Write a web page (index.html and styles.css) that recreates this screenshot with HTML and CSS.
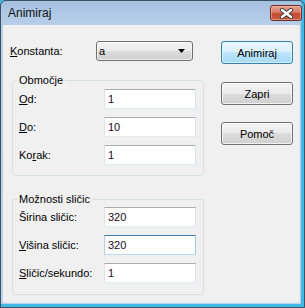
FILE: index.html
```html
<!DOCTYPE html>
<html>
<head>
<meta charset="utf-8">
<link rel="stylesheet" href="styles.css">
</head>
<body>
<div class="window">
  <div class="titlebar">
    <span class="title">Animiraj</span>
    <div class="close">
      <svg width="15" height="11" viewBox="0 0 15 11">
        <path d="M3 2 L12 9 M12 2 L3 9" stroke="#3b3b3b" stroke-width="4.2" stroke-linecap="round"/>
        <path d="M3 2 L12 9 M12 2 L3 9" stroke="#ffffff" stroke-width="2.4" stroke-linecap="round"/>
      </svg>
    </div>
  </div>
  <div class="client">
    <div class="left">
      <div class="top-row">
        <span class="lbl"><u>K</u>onstanta:</span>
        <div class="combo">
          <span>a</span>
          <svg width="7" height="4" viewBox="0 0 7 4"><path d="M0 0 H7 L3.5 4 Z" fill="#000"/></svg>
        </div>
      </div>
      <fieldset class="group g1">
        <legend>Območje</legend>
        <div class="field"><span class="flbl"><u>O</u>d:</span><div class="input">1</div></div>
        <div class="field"><span class="flbl"><u>D</u>o:</span><div class="input">10</div></div>
        <div class="field"><span class="flbl">Ko<u>r</u>ak:</span><div class="input">1</div></div>
      </fieldset>
      <fieldset class="group g2">
        <legend>Možnosti sličic</legend>
        <div class="field"><span class="flbl">Širina sličic:</span><div class="input">320</div></div>
        <div class="field"><span class="flbl"><u>V</u>išina sličic:</span><div class="input focus">320</div></div>
        <div class="field"><span class="flbl"><u>S</u>ličic/sekundo:</span><div class="input">1</div></div>
      </fieldset>
    </div>
    <div class="buttons">
      <div class="btn default">Animiraj</div>
      <div class="btn b2">Zapri</div>
      <div class="btn b3">Pomoč</div>
    </div>
  </div>
</div>
</body>
</html>
```
FILE: styles.css
```css
* { box-sizing: border-box; }
html, body { margin: 0; padding: 0; }
body {
  width: 305px;
  height: 308px;
  overflow: hidden;
  font-family: "Liberation Sans", Arial, sans-serif;
  font-size: 11px;
  color: #000;
  background: #3fb9e9;
}
.window {
  width: 305px;
  height: 308px;
  border: 1px solid #3e5063;
  border-radius: 6px 6px 0 0;
  background: linear-gradient(#a5c0df 0, #b7cfe9 24px, #bcd3eb 100%);
  box-shadow: inset -3px -3px 0 #42b8e6;
  display: flex;
  flex-direction: column;
}
.titlebar {
  height: 24px;
  display: flex;
  justify-content: space-between;
  align-items: flex-start;
  padding: 0 2px 0 7px;
}
.title {
  font-size: 12px;
  line-height: 14px;
  margin-top: 5px;
  color: #111;
}
.close {
  margin-top: 4px;
  width: 32px;
  height: 16px;
  border: 1px solid #6e2b22;
  border-radius: 3px;
  background: linear-gradient(#e5a292 0, #d97a66 45%, #c44a31 55%, #c95b42 100%);
  box-shadow: inset 0 0 0 1px rgba(255, 210, 200, 0.45);
  display: flex;
  align-items: center;
  justify-content: center;
}
.client {
  flex: 1;
  margin: 0 5px 5px 2px;
  background: #f0f0f0;
  box-shadow: 1px 1px 0 #dde8f3;
  display: flex;
  padding: 16px 0 0 7px;
}
.left {
  width: 194px;
  display: flex;
  flex-direction: column;
}
.top-row {
  display: flex;
  align-items: center;
  height: 20px;
}
.lbl {
  width: 86px;
}
u {
  text-decoration: underline;
  text-underline-offset: 1px;
}
.combo {
  width: 97px;
  height: 20px;
  border: 1px solid #707070;
  border-radius: 3px;
  background: linear-gradient(#f2f2f2 0, #ebebeb 50%, #dddddd 50%, #cfcfcf 100%);
  box-shadow: inset 0 0 0 1px rgba(255, 255, 255, 0.6);
  display: flex;
  align-items: center;
  justify-content: space-between;
  padding: 0 7px 0 2px;
}
.group {
  margin: 0 0 0 2px;
  width: 192px;
  min-width: 0;
  border: 1px solid #d5dfe5;
  border-radius: 3px;
  padding: 2px 7px 10px 6px;
}
.g1 { margin-top: 12px; }
.g2 { margin-top: 16px; padding-top: 1px; padding-bottom: 11px; }
legend {
  padding: 0 2px;
  margin-left: -2px;
  line-height: 14px;
}
.field {
  display: flex;
  align-items: center;
  height: 20px;
  margin-bottom: 8px;
}
.field:last-child { margin-bottom: 0; }
.flbl { width: 85px; }
.input {
  width: 92px;
  height: 20px;
  background: #fff;
  border: 1px solid;
  border-color: #abadb3 #dbdfe6 #e3e9ef #e2e3ea;
  padding: 0 0 0 3px;
  line-height: 18px;
  color: #220a22;
}
.input.focus {
  border-color: #3d7bad #a4c9e3 #b7d9ed #b5cfe7;
}
.buttons {
  margin-left: 17px;
  display: flex;
  flex-direction: column;
}
.btn {
  width: 72px;
  height: 23px;
  border: 1px solid #707070;
  border-radius: 3px;
  background: linear-gradient(#f2f2f2 0, #ebebeb 50%, #dddddd 50%, #cfcfcf 100%);
  box-shadow: inset 0 0 0 1px rgba(255, 255, 255, 0.7);
  display: flex;
  align-items: center;
  justify-content: center;
}
.btn.default {
  border-color: #3c7fb1;
  background: linear-gradient(#eaf6fd 0, #d9f0fc 50%, #bee6fd 50%, #a7d9f5 100%);
  box-shadow: inset 0 0 0 1px rgba(220, 245, 255, 0.8);
}
.b2 { margin-top: 18px; }
.b3 { margin-top: 17px; }
```
